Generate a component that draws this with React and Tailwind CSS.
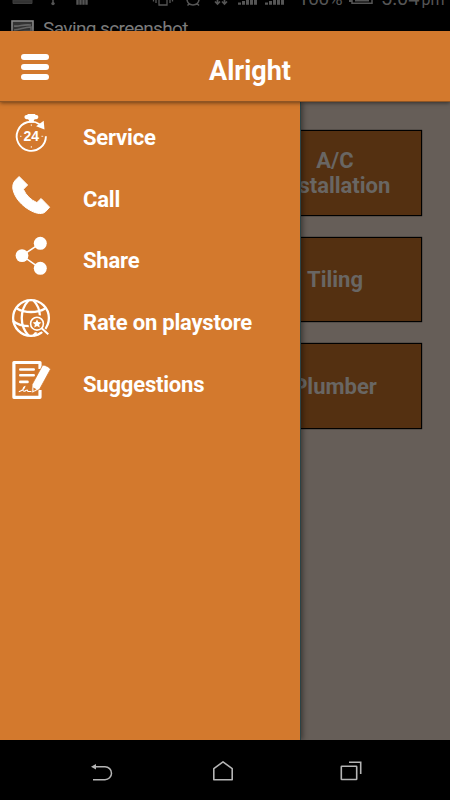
const ServiceIcon = () => (
  <svg width="40" height="40" viewBox="0 0 40 40" fill="none">
    <path d="M34.9 23.3A14.6 14.6 0 1 1 28.5 11.2" stroke="#fff" strokeWidth="1.9" />
    <path d="M16.5 1h7.8v1h1a1.9 1.9 0 0 1 0 4.2h-1.6l-1 1.6v2h-4.6v-2l-1-1.6h-1.6a1.9 1.9 0 0 1 0-4.2h1z" fill="#fff" />
    <path d="M32.7 7.7l.8 8.8-8.4-3.2z" fill="#fff" />
    <path d="M20.3 11.3v1.8M20.3 33v1.8M9 23.3h1.5M30.4 23.3h1.8" stroke="#fff" strokeOpacity=".8" />
    <text x="20.3" y="28.1" textAnchor="middle" fill="#fff" className="font-['Liberation_Sans',sans-serif] text-[14px] font-bold">24</text>
  </svg>
);

const CallIcon = () => (
  <svg width="40" height="40" viewBox="0 0 40 40" fill="#fff" stroke="#fff" strokeWidth="1" strokeLinejoin="round">
    <path d="M8.1 1.5L16.6 10l-4.2 4.3C15 20.2 19.7 24.9 25.9 27.6l4.2-4.1 8.5 8.7-4.2 4.6C31.6 39.4 26.4 39 20.5 36 10.5 31 3.5 22.5 1.9 14 1.4 10.6 2.2 7.6 4.3 5.3z" />
  </svg>
);

const ShareIcon = () => (
  <svg width="40" height="40" viewBox="0 0 40 40" fill="#fff">
    <path d="M29.3 7.3L11 19.6l18.3 12.7" fill="none" stroke="#fff" strokeWidth="1.6" />
    <circle cx="11" cy="19.6" r="6.4" />
    <circle cx="29.3" cy="7.3" r="6.5" />
    <circle cx="29.3" cy="32.3" r="6.5" />
  </svg>
);

const RateIcon = () => (
  <svg width="40" height="40" viewBox="0 0 40 40" fill="none" stroke="#fff" strokeWidth="2.3">
    <circle cx="20" cy="20" r="17.9" />
    <path d="M17.5 2.5C8.5 12 8.5 28 17.5 37.5M22.5 2.5c4.4 4.5 6.2 10 6.4 15M5.8 10.4c8 4.8 20.4 4.8 28.4 0M2 22.8c4.5 4 10.5 5.3 17 5.4M22.5 37.5c1.2-1 2.2-2.2 3-3.6" />
    <circle cx="26" cy="25.7" r="8" stroke="#d3792d" strokeWidth="1.4" fill="#d3792d" />
    <path d="M30 30l7.4 6.6" stroke="#d3792d" strokeWidth="4.4" />
    <circle cx="26" cy="25.7" r="6.4" strokeWidth="1.6" />
    <path d="M30.6 30.3l6.7 6" strokeWidth="2" />
    <path d="M26 21.2l1.3 2.9 3.1.3-2.3 2.1.7 3.1-2.8-1.6-2.8 1.6.7-3.1-2.3-2.1 3.1-.3z" fill="#fff" stroke="none" />
  </svg>
);

const SuggestionsIcon = () => (
  <svg width="40" height="40" viewBox="0 0 40 40" fill="none" stroke="#fff">
    <path d="M29 9V2.5H2.9v34.8H29V30" strokeWidth="3.2" strokeLinejoin="round" />
    <path d="M9.3 9.5h13.4M9.3 15.2h13.4M9.3 21.9h7.2" strokeWidth="2.6" strokeLinecap="round" />
    <path d="M7.8 31.7c3-1 5.5-3 6-5.1-1.8.5-2.8 4.7-.6 4.7 1.2 0 2.2-1.5 3-1.3.6.3 0 1.4 1 1.5h5" strokeWidth="1.1" />
    <path d="M31.4 5.6c1.7-1.4 8 2 8 3.9L28.5 29.4l-7.8 3.9.4-8.8z" fill="#fff" stroke="#d3792d" strokeWidth=".8" />
    <path d="M22.3 27.4l3.2 1.9-3 1.6z" fill="#d3792d" stroke="none" />
  </svg>
);

const menuItems = [
  { name: "Service", icon: <ServiceIcon /> },
  { name: "Call", icon: <CallIcon /> },
  { name: "Share", icon: <ShareIcon /> },
  { name: "Rate on playstore", icon: <RateIcon /> },
  { name: "Suggestions", icon: <SuggestionsIcon /> },
];

const services = ["A/C Installation", "Tiling", "Plumber"];

// Status icons are sliding out of the top edge
const StatusBar = () => (
  <div className="relative h-[31px] shrink-0 overflow-hidden bg-black text-[#7c7c7c]">
    <div className="flex h-[6px] items-end text-[#555]">
      <svg width="290" height="6" viewBox="0 0 290 6" fill="none" stroke="#555">
        <path d="M13 0h19v3.5H13z" fill="#333" stroke="#3c3c3c" />
        <path d="M53 0v3" strokeWidth="1.5" />
        <circle cx="53" cy="3.6" r="1.7" fill="#555" stroke="none" />
        <path d="M77.5 0v4.7M80.5 0v4.7M83.5 0v4.7M86.5 0v4.7" strokeWidth="2.4" />
        <path d="M159 0v5h8V0M156 0v3M170 0v3M153.5 0v1.5M172.5 0v1.5" strokeWidth="1.3" />
        <path d="M187 0c1 6.5 11 6.5 12 0M189.5 3.5l-2 2M197 3.5l2 2" strokeWidth="1.5" />
        <path d="M217.5 0v4M224.5 0v4M215 1.5l2.5 2.5L220 1.5M222 1.5l2.5 2.5L227 1.5" strokeWidth="1.7" />
        <path d="M239.5 2.5v2.2M243.5 1v3.7M247.5 0v4.7M251.5 0v4.7M255.5 0v4.7M266.5 2.5v2.2M270.5 1v3.7M274.5 0v4.7M278.5 0v4.7M282.5 0v4.7" strokeWidth="3" />
      </svg>
      <span className="ml-[8px] h-[6px] w-[50px] text-[19px] leading-[6px] tracking-[-0.4px]"><span className="relative -top-[4px]">100%</span></span>
      <svg className="ml-[1px]" width="25" height="6" viewBox="0 0 25 6" fill="none" stroke="#555">
        <path d="M3 0v3.3h20V0" strokeWidth="1.5" />
        <path d="M0 1h3M6 .5h14" strokeWidth="2" />
      </svg>
      <span className="ml-[7px] h-[6px] whitespace-nowrap text-[20px] leading-[6px]"><span className="relative -top-[5px]">5:04<span className="ml-[2px] text-[16px]">pm</span></span></span>
    </div>
    <div className="flex items-start pt-[12px] pl-[11px]">
      <svg className="mt-[2px]" width="23" height="18" viewBox="0 0 23 18" fill="none">
        <rect x="1" y="1" width="21" height="18" fill="#333" stroke="#888" strokeWidth="1.6" />
        <path d="M3 6c6 1 8-2 17-1M3 10c7 0 9-3 17-3v4c-6 0-10 0-17 2" stroke="#666" strokeWidth="1.6" />
      </svg>
      <span className="ml-[9px] text-[19px] leading-[22px] tracking-[-0.6px] whitespace-nowrap">Saving screenshot</span>
    </div>
  </div>
);

const Header = () => (
  <header className="relative z-20 flex h-[71px] shrink-0 items-center border-b border-[#8f5524] bg-[#d3792d] shadow-[0_1px_4px_rgba(0,0,0,0.5)]">
    <button className="ml-[21px] flex w-[28px] flex-col gap-1 pt-[2px]">
      <span className="h-[6px] w-full rounded-full bg-white" />
      <span className="h-[6px] w-full rounded-full bg-white" />
      <span className="h-[6px] w-full rounded-full bg-white" />
    </button>
    <h1 className="ml-[160px] pt-[9px] text-[27px] leading-8 font-bold">Alright</h1>
  </header>
);

const Drawer = () => (
  <aside className="absolute inset-y-0 left-0 z-10 w-[300px] bg-[#d3792d] pt-[11px] shadow-[1px_0_0_#2b4245,3px_0_5px_rgba(0,0,0,0.4)]">
    <ul>
      {menuItems.map((item) => (
        <li key={item.name} className="flex h-[61.7px] items-start pl-[11px]">
          {item.icon}
          <span className="ml-[32px] pt-[10px] text-[22px] leading-[30px] font-bold tracking-[-0.2px] whitespace-nowrap">{item.name}</span>
        </li>
      ))}
    </ul>
  </aside>
);

const NavBar = () => (
  <nav className="flex h-[60px] shrink-0 items-center bg-black pt-[2px]">
    <svg className="ml-[90px]" width="24" height="24" viewBox="0 0 24 24" fill="none" stroke="#b5b5b5" strokeWidth="1.5">
      <path d="M3 7.7h12a6.5 6.5 0 0 1 0 13H3" />
      <path d="M1 7.7L6 5v5.4z" fill="#b5b5b5" stroke="none" />
    </svg>
    <svg className="ml-[97px]" width="24" height="24" viewBox="0 0 24 24" fill="none" stroke="#b5b5b5" strokeWidth="1.6">
      <path d="M2.8 20.7V9.7L12 2.9l9.2 6.8v11z" strokeLinejoin="round" />
    </svg>
    <svg className="ml-[104px]" width="24" height="24" viewBox="0 0 24 24" fill="none" stroke="#b5b5b5" strokeWidth="1.6">
      <rect x="2.3" y="7.2" width="15.4" height="13.3" rx=".5" />
      <path d="M10 3.2h11.7V15" />
    </svg>
  </nav>
);

export default function App() {
  return (
    <div className="flex h-[800px] w-[450px] flex-col overflow-hidden bg-black font-['Roboto',sans-serif] text-white">
      <StatusBar />
      <Header />
      <main className="relative flex-1 overflow-hidden bg-[#665e58]">
        <div className="flex flex-col items-end gap-[21.2px] pt-[28px] pr-[28.5px]">
          {services.map((name) => (
            <div
              key={name}
              className="flex h-[85.5px] w-[173px] items-center justify-center border border-black bg-[#543011] px-6 text-center text-[22px] leading-[25px] font-bold text-[#696663] shadow-[0_0_1px_#000]"
            >
              {name}
            </div>
          ))}
        </div>
        <Drawer />
      </main>
      <NavBar />
    </div>
  );
}
